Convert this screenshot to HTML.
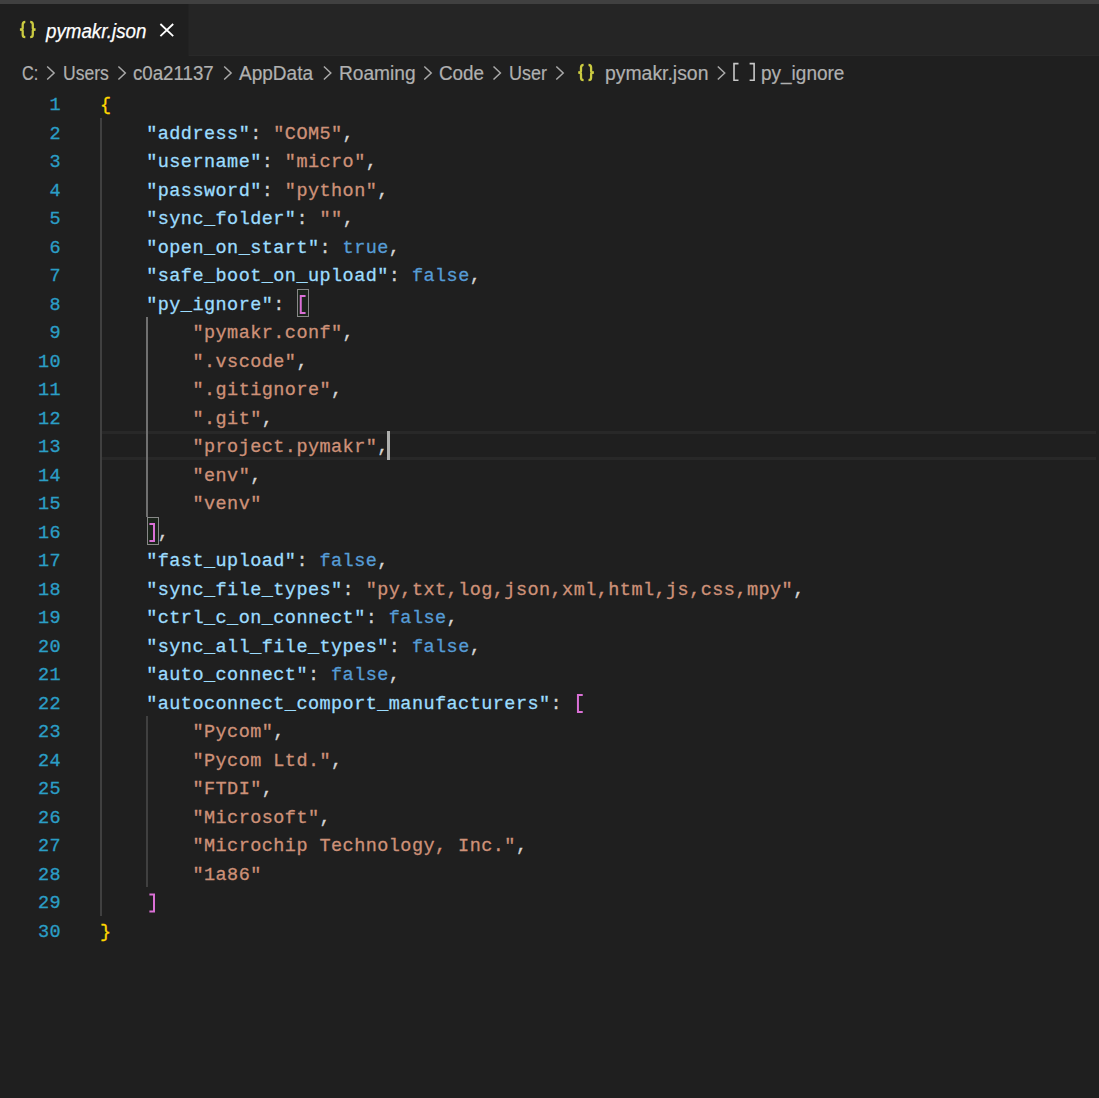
<!DOCTYPE html><html><head><meta charset="utf-8"><style>
html,body{margin:0;padding:0;background:#1f1f1f;width:1099px;height:1098px;overflow:hidden;position:relative}
*{box-sizing:border-box}
.topbar{position:absolute;left:0;top:0;width:1099px;height:4px;background:#404040}
.tabbar{position:absolute;left:0;top:4px;width:1099px;height:52px;background:#252525}
.tab{position:absolute;left:0;top:4px;width:188px;height:52px;background:#1f1f1f}
.tabtitle{position:absolute;left:46px;top:19px;transform-origin:0 0;transform:scaleX(0.915);font:italic 20.5px "Liberation Sans",sans-serif;color:#ffffff;-webkit-text-stroke:0.25px;white-space:pre}
.bc{position:absolute;top:61.5px;transform-origin:0 0;font:19.5px "Liberation Sans",sans-serif;color:#b0b0b0;-webkit-text-stroke:0.2px;white-space:pre}
.code{font-family:"Liberation Mono",monospace;font-size:18.5px;letter-spacing:0.45px;-webkit-text-stroke:0.3px}
.ln{position:absolute;left:100.0px;height:28.5px;line-height:28.5px;white-space:pre;color:#d4d4d4;padding-top:3px}
.nm{position:absolute;left:0;width:61px;text-align:right;height:28.5px;line-height:28.5px;color:#2b9ec6;padding-top:3px}
.k{color:#9cdcfe}.s{color:#ce9178}.c{color:#569cd6}.p{color:#d4d4d4}.b1{color:#ffd700}.b2{color:#da70d6}
.g{position:absolute;width:2px;background:#404040}
.ga{background:#707070}
.cur{position:absolute;left:101px;width:995px;border-top:3px solid #282828;border-bottom:3px solid #282828}
.bm{position:absolute;border:1px solid #888;background:#1b241b}
.caret{position:absolute;width:3px;background:#aeafad}
</style></head><body><div class="topbar"></div><div class="tabbar"></div><div class="tab"></div><div style="position:absolute;left:188px;top:4px;width:1px;height:52px;background:#222222"></div><div style="position:absolute;left:189px;top:55px;width:910px;height:1px;background:#292929"></div>
<div class="bc" style="left:22.2px;transform:scaleX(0.833)">C:</div>
<div class="bc" style="left:63.1px;transform:scaleX(0.900)">Users</div>
<div class="bc" style="left:133.3px;transform:scaleX(0.958)">c0a21137</div>
<div class="bc" style="left:239.0px;transform:scaleX(0.975)">AppData</div>
<div class="bc" style="left:338.7px;transform:scaleX(0.981)">Roaming</div>
<div class="bc" style="left:439.2px;transform:scaleX(0.967)">Code</div>
<div class="bc" style="left:509.2px;transform:scaleX(0.920)">User</div>
<div class="bc" style="left:604.7px;transform:scaleX(0.994)">pymakr.json</div>
<div class="bc" style="left:761.1px;transform:scaleX(0.974)">py_ignore</div>
<svg style="position:absolute;left:0;top:0" width="1099" height="90"><path d="M47.2 66.5 L54.1 73 L47.2 79.5" fill="none" stroke="#a9a9a9" stroke-width="1.5"/><path d="M118.4 66.5 L125.3 73 L118.4 79.5" fill="none" stroke="#a9a9a9" stroke-width="1.5"/><path d="M224.2 66.5 L231.1 73 L224.2 79.5" fill="none" stroke="#a9a9a9" stroke-width="1.5"/><path d="M323.9 66.5 L330.8 73 L323.9 79.5" fill="none" stroke="#a9a9a9" stroke-width="1.5"/><path d="M424.3 66.5 L431.2 73 L424.3 79.5" fill="none" stroke="#a9a9a9" stroke-width="1.5"/><path d="M493.5 66.5 L500.4 73 L493.5 79.5" fill="none" stroke="#a9a9a9" stroke-width="1.5"/><path d="M556.3 66.5 L563.2 73 L556.3 79.5" fill="none" stroke="#a9a9a9" stroke-width="1.5"/><path d="M717.8 66.5 L724.7 73 L717.8 79.5" fill="none" stroke="#a9a9a9" stroke-width="1.5"/><g transform="translate(0.0 0.0)" fill="none" stroke="#cbcb41" stroke-width="2.3"><path d="M25.3 21.9 Q22.7 21.9 22.7 24.6 L22.7 27.9 Q22.7 29.5 19.9 29.5 Q22.7 29.5 22.7 31.1 L22.7 34.4 Q22.7 37.1 25.3 37.1"/><path d="M30.2 21.9 Q32.8 21.9 32.8 24.6 L32.8 27.9 Q32.8 29.5 35.6 29.5 Q32.8 29.5 32.8 31.1 L32.8 34.4 Q32.8 37.1 30.2 37.1"/></g><g transform="translate(558.3 43.0)" fill="none" stroke="#cbcb41" stroke-width="2.3"><path d="M25.3 21.9 Q22.7 21.9 22.7 24.6 L22.7 27.9 Q22.7 29.5 19.9 29.5 Q22.7 29.5 22.7 31.1 L22.7 34.4 Q22.7 37.1 25.3 37.1"/><path d="M30.2 21.9 Q32.8 21.9 32.8 24.6 L32.8 27.9 Q32.8 29.5 35.6 29.5 Q32.8 29.5 32.8 31.1 L32.8 34.4 Q32.8 37.1 30.2 37.1"/></g><path d="M160.4 24.0 L173.2 36.2 M173.2 24.0 L160.4 36.2" stroke="#ffffff" stroke-width="1.8" fill="none"/><path d="M738.5 63.6 L734 63.6 L734 80.2 L738.5 80.2 M749.6 63.6 L754.1 63.6 L754.1 80.2 L749.6 80.2" stroke="#c8c8c8" stroke-width="1.6" fill="none"/></svg>
<div class="tabtitle">pymakr.json</div>
<div class="cur" style="top:431px;height:29px"></div>
<div class="g" style="left:100.00px;top:117.50px;height:798.00px"></div>
<div class="g ga" style="left:146.00px;top:317.00px;height:199.50px"></div>
<div class="g" style="left:146.00px;top:716.00px;height:171.00px"></div>
<div class="bm" style="left:296.95px;top:289.00px;width:12.00px;height:28.00px"></div>
<div class="bm" style="left:146.80px;top:517.00px;width:12.00px;height:28.00px"></div>
<svg style="position:absolute;left:0;top:0" width="1099" height="1098" fill="none" stroke="#da70d6" stroke-width="2"><path d="M305.55 295.90 H300.75 V313.10 H305.55"/><path d="M149.40 523.90 H154.00 V541.10 H149.40"/><path d="M582.75 694.90 H577.95 V712.10 H582.75"/><path d="M149.40 894.40 H154.00 V911.60 H149.40"/></svg>
<div class="code"><div class="nm" style="top:89.00px">1</div><div class="nm" style="top:117.50px">2</div><div class="nm" style="top:146.00px">3</div><div class="nm" style="top:174.50px">4</div><div class="nm" style="top:203.00px">5</div><div class="nm" style="top:231.50px">6</div><div class="nm" style="top:260.00px">7</div><div class="nm" style="top:288.50px">8</div><div class="nm" style="top:317.00px">9</div><div class="nm" style="top:345.50px">10</div><div class="nm" style="top:374.00px">11</div><div class="nm" style="top:402.50px">12</div><div class="nm" style="top:431.00px">13</div><div class="nm" style="top:459.50px">14</div><div class="nm" style="top:488.00px">15</div><div class="nm" style="top:516.50px">16</div><div class="nm" style="top:545.00px">17</div><div class="nm" style="top:573.50px">18</div><div class="nm" style="top:602.00px">19</div><div class="nm" style="top:630.50px">20</div><div class="nm" style="top:659.00px">21</div><div class="nm" style="top:687.50px">22</div><div class="nm" style="top:716.00px">23</div><div class="nm" style="top:744.50px">24</div><div class="nm" style="top:773.00px">25</div><div class="nm" style="top:801.50px">26</div><div class="nm" style="top:830.00px">27</div><div class="nm" style="top:858.50px">28</div><div class="nm" style="top:887.00px">29</div><div class="nm" style="top:915.50px">30</div><div class="ln" style="top:89.00px"><span class="b1">{</span></div><div class="ln" style="top:117.50px">    <span class="k">&quot;address&quot;</span><span class="p">: </span><span class="s">&quot;COM5&quot;</span><span class="p">,</span></div><div class="ln" style="top:146.00px">    <span class="k">&quot;username&quot;</span><span class="p">: </span><span class="s">&quot;micro&quot;</span><span class="p">,</span></div><div class="ln" style="top:174.50px">    <span class="k">&quot;password&quot;</span><span class="p">: </span><span class="s">&quot;python&quot;</span><span class="p">,</span></div><div class="ln" style="top:203.00px">    <span class="k">&quot;sync_folder&quot;</span><span class="p">: </span><span class="s">&quot;&quot;</span><span class="p">,</span></div><div class="ln" style="top:231.50px">    <span class="k">&quot;open_on_start&quot;</span><span class="p">: </span><span class="c">true</span><span class="p">,</span></div><div class="ln" style="top:260.00px">    <span class="k">&quot;safe_boot_on_upload&quot;</span><span class="p">: </span><span class="c">false</span><span class="p">,</span></div><div class="ln" style="top:288.50px">    <span class="k">&quot;py_ignore&quot;</span><span class="p">: </span> </div><div class="ln" style="top:317.00px">        <span class="s">&quot;pymakr.conf&quot;</span><span class="p">,</span></div><div class="ln" style="top:345.50px">        <span class="s">&quot;.vscode&quot;</span><span class="p">,</span></div><div class="ln" style="top:374.00px">        <span class="s">&quot;.gitignore&quot;</span><span class="p">,</span></div><div class="ln" style="top:402.50px">        <span class="s">&quot;.git&quot;</span><span class="p">,</span></div><div class="ln" style="top:431.00px">        <span class="s">&quot;project.pymakr&quot;</span><span class="p">,</span></div><div class="ln" style="top:459.50px">        <span class="s">&quot;env&quot;</span><span class="p">,</span></div><div class="ln" style="top:488.00px">        <span class="s">&quot;venv&quot;</span></div><div class="ln" style="top:516.50px">     <span class="p">,</span></div><div class="ln" style="top:545.00px">    <span class="k">&quot;fast_upload&quot;</span><span class="p">: </span><span class="c">false</span><span class="p">,</span></div><div class="ln" style="top:573.50px">    <span class="k">&quot;sync_file_types&quot;</span><span class="p">: </span><span class="s">&quot;py,txt,log,json,xml,html,js,css,mpy&quot;</span><span class="p">,</span></div><div class="ln" style="top:602.00px">    <span class="k">&quot;ctrl_c_on_connect&quot;</span><span class="p">: </span><span class="c">false</span><span class="p">,</span></div><div class="ln" style="top:630.50px">    <span class="k">&quot;sync_all_file_types&quot;</span><span class="p">: </span><span class="c">false</span><span class="p">,</span></div><div class="ln" style="top:659.00px">    <span class="k">&quot;auto_connect&quot;</span><span class="p">: </span><span class="c">false</span><span class="p">,</span></div><div class="ln" style="top:687.50px">    <span class="k">&quot;autoconnect_comport_manufacturers&quot;</span><span class="p">: </span> </div><div class="ln" style="top:716.00px">        <span class="s">&quot;Pycom&quot;</span><span class="p">,</span></div><div class="ln" style="top:744.50px">        <span class="s">&quot;Pycom Ltd.&quot;</span><span class="p">,</span></div><div class="ln" style="top:773.00px">        <span class="s">&quot;FTDI&quot;</span><span class="p">,</span></div><div class="ln" style="top:801.50px">        <span class="s">&quot;Microsoft&quot;</span><span class="p">,</span></div><div class="ln" style="top:830.00px">        <span class="s">&quot;Microchip Technology, Inc.&quot;</span><span class="p">,</span></div><div class="ln" style="top:858.50px">        <span class="s">&quot;1a86&quot;</span></div><div class="ln" style="top:887.00px">     </div><div class="ln" style="top:915.50px"><span class="b1">}</span></div></div>
<div class="caret" style="left:387px;top:431px;height:29px"></div></body></html>
